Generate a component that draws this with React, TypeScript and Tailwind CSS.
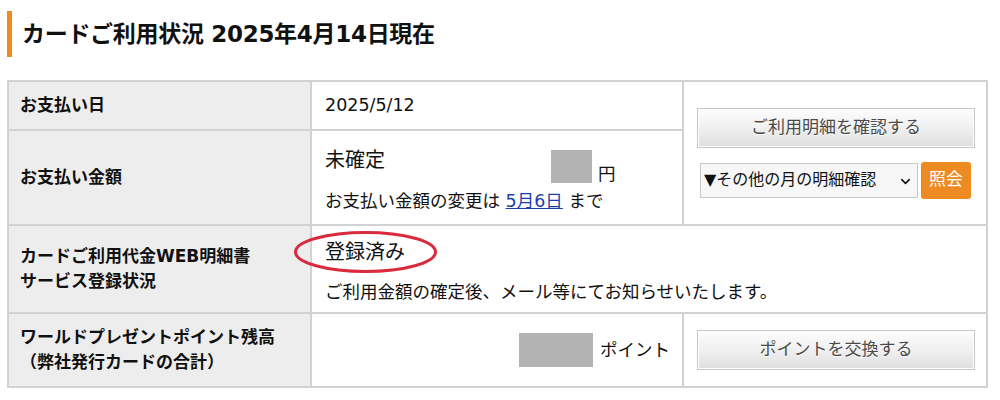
import { ChevronDown } from "lucide-react";

const font = {
  fontFamily: '"DejaVu Sans", "Noto Sans CJK JP", sans-serif',
};

const GrayButton = ({ label }: { label: string }) => (
  <button className="w-[278px] h-[40px] border border-[#c6c6c6] bg-gradient-to-b from-[#fdfdfd] via-[#f0f0f0] to-[#dedede] shadow-[inset_0_0_0_1px_#ffffff] text-[17px] text-[#4a4a4a] [text-shadow:0_1px_0_#ffffff]">
    {label}
  </button>
);

const Label = ({ lines }: { lines: string[] }) => (
  <div className="bg-[#ededed] flex flex-col justify-center pl-[11px] text-[17px] leading-[25px] font-bold text-[#111111]">
    {lines.map((l) => (
      <div key={l}>{l}</div>
    ))}
  </div>
);

export default function App() {
  return (
    <div className="w-[1000px] h-[400px] bg-white text-[#111111]" style={font}>
      <div className="pt-[11px] pl-[7px] flex items-stretch">
        <div className="w-[5px] h-[46px] bg-[#ee8a22]" />
        <h1 className="ml-[10px] flex items-center text-[23px] font-bold tracking-[-0.3px]">
          カードご利用状況 2025年4月14日現在
        </h1>
      </div>

      <div className="ml-[7px] mt-[23px] w-[981px] grid grid-cols-[301px_370px_302px] grid-rows-[47px_93px_86px_72px] gap-[2px] p-[2px] bg-[#d2d2d2]">
        <Label lines={["お支払い日"]} />
        <div className="bg-white flex items-center pl-[13px] text-[17.5px]">2025/5/12</div>
        <div className="row-span-2 bg-white flex flex-col justify-center pl-[13px] gap-[14px]">
          <GrayButton label="ご利用明細を確認する" />
          <div className="flex items-center gap-[3px] pl-[3px]">
            <div className="relative w-[218px] h-[35px] border border-[#c8c8c8] bg-[#f7f7f7] flex items-center pl-[3px] text-[16px]">
              ▼その他の月の明細確認
              <ChevronDown className="absolute right-[4px] top-[10px] w-[15px] h-[15px]" strokeWidth={2.5} />
            </div>
            <button className="w-[50px] h-[37px] rounded-[3px] bg-[#ee8a22] text-white text-[17px]">照会</button>
          </div>
        </div>

        <Label lines={["お支払い金額"]} />
        <div className="bg-white flex flex-col pl-[13px] pt-[17px]">
          <div className="flex items-start h-[36px]">
            <div className="w-[226px] text-[20px] leading-[24px]">未確定</div>
            <div className="mt-[2px] w-[41px] h-[33px] bg-[#b3b3b3]" />
            <div className="ml-[6px] mt-[14px] text-[17.5px] leading-[24px]">円</div>
          </div>
          <div className="mt-[5px] text-[17.5px] leading-[24px]">
            お支払い金額の変更は{" "}
            <a href="#" className="text-[#1a3fa8] underline">
              5月6日
            </a>{" "}
            まで
          </div>
        </div>

        <Label lines={["カードご利用代金WEB明細書", "サービス登録状況"]} />
        <div className="col-span-2 bg-white relative flex flex-col pl-[13px] pt-[13px]">
          <div className="text-[20px] leading-[26px]">登録済み</div>
          <div className="mt-[14px] text-[17.5px] leading-[26px]">
            ご利用金額の確定後、メール等にてお知らせいたします。
          </div>
          <svg className="absolute left-[-19px] top-[4px]" width="145" height="44" viewBox="0 0 145 44">
            <ellipse cx="72.5" cy="22" rx="70" ry="19.5" fill="none" stroke="#d92b3e" strokeWidth="3" />
          </svg>
        </div>

        <Label lines={["ワールドプレゼントポイント残高", "（弊社発行カードの合計）"]} />
        <div className="bg-white flex items-center justify-end pr-[12px]">
          <div className="w-[74px] h-[34px] bg-[#b3b3b3]" />
          <div className="ml-[7px] text-[17.5px]">ポイント</div>
        </div>
        <div className="bg-white flex items-center pl-[13px]">
          <GrayButton label="ポイントを交換する" />
        </div>
      </div>
    </div>
  );
}
